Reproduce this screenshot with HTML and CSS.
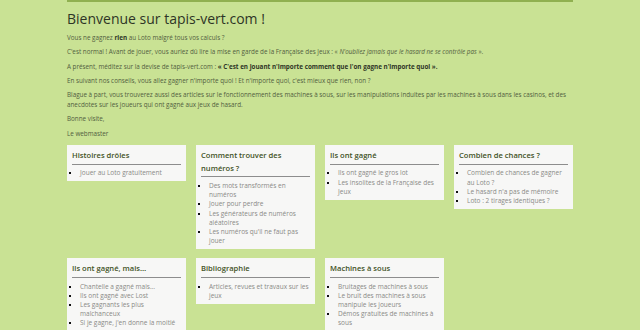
FILE: index.html
```html
<!DOCTYPE html>
<html lang="fr">
<head>
<meta charset="utf-8">
<title>tapis-vert.com</title>
<link rel="stylesheet" href="styles.css">
</head>
<body>
<div class="page">
  <h1 class="title">Bienvenue sur tapis-vert.com !</h1>
  <p class="txt">Vous ne gagnez <strong>rien</strong> au Loto malgré tous vos calculs ?</p>
  <p class="txt">C'est normal ! Avant de jouer, vous auriez dû lire la mise en garde de la Française des Jeux : « <em>N'oubliez jamais que le hasard ne se contrôle pas</em> ».</p>
  <p class="txt">A présent, méditez sur la devise de tapis-vert.com : <strong>« C'est en jouant n'importe comment que l'on gagne n'importe quoi ».</strong></p>
  <p class="txt">En suivant nos conseils, vous allez gagner n'importe quoi ! Et n'importe quoi, c'est mieux que rien, non ?</p>
  <p class="txt">Blague à part, vous trouverez aussi des articles sur le fonctionnement des machines à sous, sur les manipulations induites par les machines à sous dans les casinos, et des anecdotes sur les joueurs qui ont gagné aux jeux de hasard.</p>
  <p class="txt">Bonne visite,</p>
  <p class="txt">Le webmaster</p>

  <div class="cards">
    <div class="card">
      <h2 class="card-title">Histoires drôles</h2>
      <ul class="list">
        <li>Jouer au Loto gratuitement</li>
      </ul>
    </div>
    <div class="card">
      <h2 class="card-title">Comment trouver des numéros ?</h2>
      <ul class="list">
        <li>Des mots transformés en numéros</li>
        <li>Jouer pour perdre</li>
        <li>Les générateurs de numéros aléatoires</li>
        <li>Les numéros qu'il ne faut pas jouer</li>
      </ul>
    </div>
    <div class="card">
      <h2 class="card-title">Ils ont gagné</h2>
      <ul class="list">
        <li>Ils ont gagné le gros lot</li>
        <li>Les insolites de la Française des Jeux</li>
      </ul>
    </div>
    <div class="card">
      <h2 class="card-title">Combien de chances ?</h2>
      <ul class="list">
        <li>Combien de chances de gagner au Loto ?</li>
        <li>Le hasard n'a pas de mémoire</li>
        <li>Loto : 2 tirages identiques ?</li>
      </ul>
    </div>
    <div class="card">
      <h2 class="card-title">Ils ont gagné, mais…</h2>
      <ul class="list">
        <li>Chantelle a gagné mais…</li>
        <li>Ils ont gagné avec Lost</li>
        <li>Les gagnants les plus malchanceux</li>
        <li>Si je gagne, j'en donne la moitié</li>
      </ul>
    </div>
    <div class="card">
      <h2 class="card-title">Bibliographie</h2>
      <ul class="list">
        <li>Articles, revues et travaux sur les jeux</li>
      </ul>
    </div>
    <div class="card">
      <h2 class="card-title">Machines à sous</h2>
      <ul class="list">
        <li>Bruitages de machines à sous</li>
        <li>Le bruit des machines à sous manipule les joueurs</li>
        <li>Démos gratuites de machines à sous</li>
        <li>Les machines à sous truquées</li>
      </ul>
    </div>
  </div>
</div>
</body>
</html>
```

FILE: styles.css
```css
html, body {
  margin: 0;
  padding: 0;
  background: #c9e294;
  font-family: "Open Sans", "DejaVu Sans", sans-serif;
  color: #526040;
  overflow: hidden;
}
.page {
  width: 506px;
  margin: 0 auto;
  border-top: 2px solid #90b050;
}
.title {
  margin: 7px 0 4px;
  font-size: 14px;
  line-height: 20px;
  font-weight: 400;
  color: #2e3526;
}
.txt {
  margin: 0 0 4.3px;
  font-size: 6.3px;
  line-height: 10px;
}
.txt strong { color: #2e3526; }
.cards {
  margin-top: 6px;
  display: grid;
  grid-template-columns: repeat(4, 1fr);
  gap: 9px 10px;
  align-items: start;
}
.card {
  background: #f7f7f6;
  padding: 4.4px 5px 3.6px;
}
.card-title {
  margin: 0;
  padding: 0 0 2.3px;
  border-bottom: 1px solid #8d8d8d;
  font-size: 7.6px;
  line-height: 12.5px;
  font-weight: 600;
  color: #42521f;
}
.list {
  margin: 3.5px 0 0;
  padding: 0 0 0 8px;
  list-style: square;
  font-size: 6.5px;
  line-height: 9.2px;
  color: #8a8a86;
}
.list li::marker { color: #111; }
```
